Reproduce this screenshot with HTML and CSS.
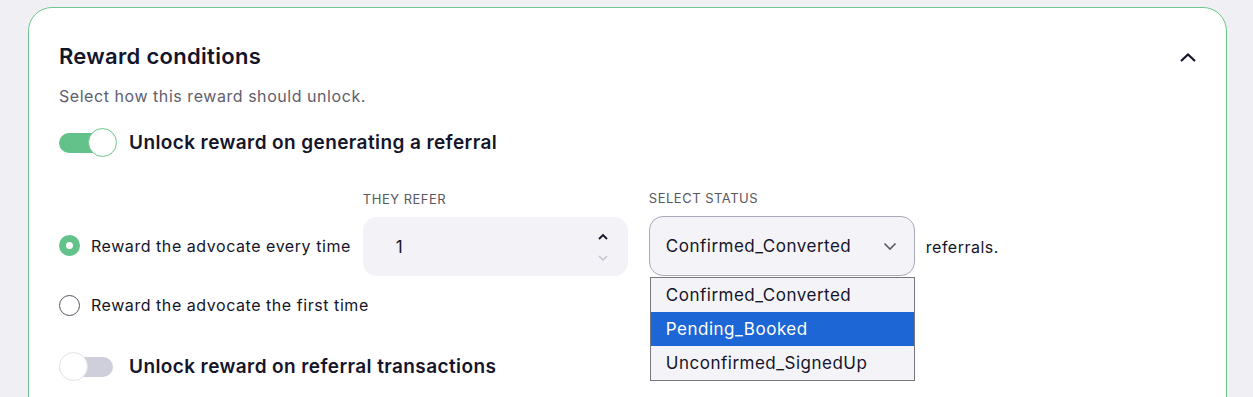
FILE: index.html
```html
<!DOCTYPE html>
<html lang="en">

<head>
    <meta charset="UTF-8">
    <meta name="viewport" content="width=device-width, initial-scale=1.0">
    <title>Reward conditions</title>
    <link rel="stylesheet" href="styles.css">
</head>

<body>
    <div class="card">
        <div class="card-head">
            <h2>Reward conditions</h2>
            <svg class="collapse" width="18" height="12" viewBox="0 0 18 12">
                <path d="M2 9 L9 2.5 L16 9" fill="none" stroke="#15152a" stroke-width="2.2" />
            </svg>
        </div>
        <p class="sub">Select how this reward should unlock.</p>

        <div class="toggle-row">
            <span class="toggle on"><span class="knob"></span></span>
            <span class="toggle-label">Unlock reward on generating a referral</span>
        </div>

        <div class="rule">
            <div class="radio-row tall">
                <span class="radio checked"></span>
                <span>Reward the advocate every time</span>
            </div>
            <div class="field">
                <label>THEY REFER</label>
                <div class="number-input">
                    <span>1</span>
                    <span class="spin">
                        <svg width="12" height="9" viewBox="0 0 12 9">
                            <path d="M2 7 L6 3 L10 7" fill="none" stroke="#15152a" stroke-width="1.8" />
                        </svg>
                        <svg width="12" height="9" viewBox="0 0 12 9">
                            <path d="M2 2 L6 6 L10 2" fill="none" stroke="#c4c4d0" stroke-width="1.5" />
                        </svg>
                    </span>
                </div>
            </div>
            <div class="field status">
                <label>SELECT STATUS</label>
                <div class="select">
                    <span>Confirmed_Converted</span>
                    <svg width="14" height="9" viewBox="0 0 14 9">
                        <path d="M1.5 1.5 L7 7 L12.5 1.5" fill="none" stroke="#5a5a66" stroke-width="1.6" />
                    </svg>
                </div>
                <ul class="options">
                    <li>Confirmed_Converted</li>
                    <li class="active">Pending_Booked</li>
                    <li>Unconfirmed_SignedUp</li>
                </ul>
            </div>
            <div class="suffix">referrals.</div>
        </div>

        <div class="radio-row second">
            <span class="radio"></span>
            <span>Reward the advocate the first time</span>
        </div>

        <div class="toggle-row last">
            <span class="toggle"><span class="knob"></span></span>
            <span class="toggle-label">Unlock reward on referral transactions</span>
        </div>
    </div>
</body>

</html>
```

FILE: styles.css
```css
* {
    margin: 0;
    padding: 0;
    box-sizing: border-box;
    font-family: Inter, "Noto Sans", sans-serif;
}

body {
    background-color: #efeff4;
    padding: 7px 26px 0 28px;
    height: 397px;
    overflow: hidden;
    color: #15152a;
}

.card {
    background-color: white;
    border: 1px solid #6cc78c;
    border-radius: 24px;
    padding: 34px 29px 60px 30px;
}

.card-head {
    display: flex;
    justify-content: space-between;
    align-items: center;
    height: 28px;
}

h2 {
    font-size: 22px;
    font-weight: 600;
    letter-spacing: 0.3px;
}

.collapse {
    margin-top: 4px;
}

.sub {
    margin-top: 14px;
    font-size: 16px;
    line-height: 24px;
    color: #5e5e6e;
    letter-spacing: 0.55px;
}

.toggle-row {
    display: flex;
    align-items: center;
    gap: 12px;
    margin-top: 20px;
    height: 29px;
}

.toggle-row.last {
    margin-top: 36px;
}

.toggle {
    position: relative;
    width: 58px;
    height: 29px;
    display: flex;
    align-items: center;
}

.toggle::before {
    content: "";
    width: 54px;
    height: 20px;
    border-radius: 10px;
    background-color: #cfcfdc;
}

.toggle.on::before {
    background-color: #62c28a;
}

.knob {
    position: absolute;
    left: 0;
    top: 0;
    width: 29px;
    height: 29px;
    border-radius: 50%;
    background-color: white;
    border: 1px solid #e2e2e8;
}

.toggle.on .knob {
    left: 29px;
    border-color: #6cc78c;
}

.toggle-label {
    font-size: 19px;
    font-weight: 600;
    letter-spacing: 0.4px;
}

.rule {
    display: flex;
    align-items: flex-end;
    margin-top: 33px;
}

.radio-row {
    display: flex;
    align-items: center;
    gap: 11px;
    font-size: 16px;
    letter-spacing: 0.55px;
    height: 22px;
}

.radio-row.tall {
    height: 57px;
    margin-bottom: 2px;
    margin-right: 12px;
}

.radio-row.second {
    margin-top: 18px;
}

.radio {
    width: 21px;
    height: 21px;
    border-radius: 50%;
    border: 1.5px solid #555560;
    background-color: white;
}

.radio.checked {
    border: 7px solid #62c28a;
}

.field label {
    display: block;
    font-size: 13px;
    line-height: 16px;
    color: #585860;
    margin-bottom: 10px;
    letter-spacing: 0.5px;
}

.number-input {
    width: 265px;
    height: 59px;
    background-color: #f2f2f7;
    border-radius: 14px;
    display: flex;
    align-items: center;
    justify-content: space-between;
    padding: 0 19px 0 33px;
    font-size: 17px;
}

.spin {
    display: flex;
    flex-direction: column;
    gap: 13px;
    margin-top: 2px;
}

.status {
    position: relative;
    margin-left: 21px;
}

.select {
    width: 266px;
    height: 60px;
    background-color: #f4f4f8;
    border: 1px solid #a9a9b8;
    border-radius: 14px;
    display: flex;
    align-items: center;
    justify-content: space-between;
    padding: 0 17px 0 16px;
    font-size: 17px;
    letter-spacing: 0.5px;
}

.options {
    position: absolute;
    left: 1px;
    top: 87px;
    width: 265px;
    list-style: none;
    background-color: #f4f4f8;
    border: 1px solid #76767c;
}

.options li {
    height: 34px;
    line-height: 34px;
    padding-left: 15px;
    font-size: 17px;
    letter-spacing: 0.5px;
}

.options li.active {
    background-color: #1c66d5;
    color: white;
}

.suffix {
    height: 59px;
    display: flex;
    align-items: center;
    margin-left: 11px;
    font-size: 16px;
    letter-spacing: 0.5px;
}
```
